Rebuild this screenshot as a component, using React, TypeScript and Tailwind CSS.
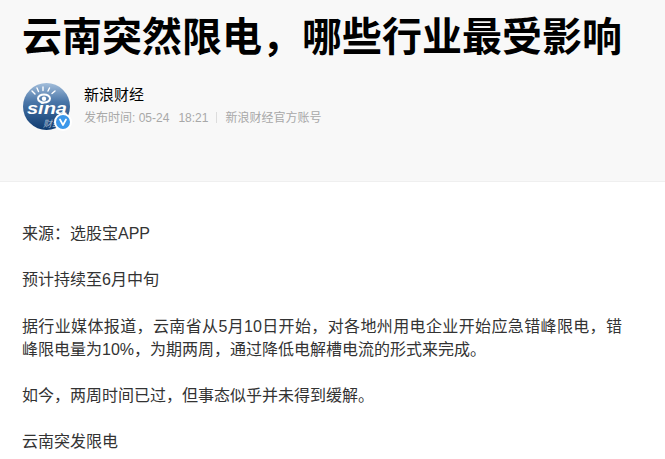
const CJK = "font-['Liberation_Sans','Noto_Sans_CJK_SC',sans-serif]";

const paragraphs = [
  '来源：选股宝APP',
  '预计持续至6月中旬',
  '据行业媒体报道，云南省从5月10日开始，对各地州用电企业开始应急错峰限电，错峰限电量为10%，为期两周，通过降低电解槽电流的形式来完成。',
  '如今，两周时间已过，但事态似乎并未得到缓解。',
  '云南突发限电',
];

const Avatar = () => (
  <div className="relative size-[47px] shrink-0">
    <svg viewBox="0 0 47 47" className="size-[47px]">
      <defs>
        <linearGradient id="sinaBg" x1="0" y1="0" x2="0" y2="1">
          <stop offset="0" stopColor="#a3bedb" />
          <stop offset="0.4" stopColor="#4a76a8" />
          <stop offset="1" stopColor="#0f3b70" />
        </linearGradient>
      </defs>
      <circle cx="23.5" cy="23.5" r="23.5" fill="url(#sinaBg)" />
      <g fill="none" stroke="#fff" strokeLinecap="round">
        <ellipse cx="21" cy="15.5" rx="6" ry="4" strokeWidth="2" />
        <path d="M12 11 L9 8 M15.5 8.5 L14 5 M20 7.5 L20 4 M25 8 L26.5 5 M29 10.5 L32 8" strokeWidth="1.4" />
      </g>
      <circle cx="21" cy="15.7" r="2.2" fill="#fff" />
      <text x="4" y="31" fill="#fff" fontSize="17" fontWeight="700" fontStyle="italic" fontFamily="Liberation Sans, sans-serif" textLength="40" lengthAdjust="spacingAndGlyphs">sina</text>
      <text x="20" y="44" fill="#a9bcd3" fontSize="9" fontStyle="italic" fontFamily="Noto Sans CJK SC, sans-serif">财经</text>
    </svg>
    <div className="absolute right-[-2px] bottom-[-1px] flex size-[18px] items-center justify-center rounded-full border-2 border-white bg-[#3b97ea]">
      <svg viewBox="0 0 10 10" className="size-[10px]" fill="none" stroke="#fff" strokeWidth="1.7" strokeLinecap="round" strokeLinejoin="round">
        <path d="M2 2.5 L5 8 L8 2.5" />
      </svg>
    </div>
  </div>
);

export default function App() {
  return (
    <div className={`${CJK} h-[459px] w-[665px] overflow-hidden bg-white`}>
      <header className="h-[182px] border-b border-[#efefef] bg-[#f8f8f8] px-[22px] pt-[14px]">
        <h1 className="whitespace-nowrap text-[40px] font-bold leading-[46px] text-black">云南突然限电，哪些行业最受影响</h1>
        <div className="mt-[23px] flex items-center gap-[15px] pl-px">
          <Avatar />
          <div className="-mt-[2px] -ml-px">
            <div className="text-[15px] leading-[20px] text-black">新浪财经</div>
            <div className="mt-[4px] flex items-center text-[12px] leading-[18px] text-[#a8a8a8]">
              <span>发布时间: 05-24</span>
              <span className="ml-[9px]">18:21</span>
              <span className="mx-[8px] h-[11px] w-px bg-[#dddddd]" />
              <span>新浪财经官方账号</span>
            </div>
          </div>
        </div>
      </header>
      <main className="w-[644px] px-[22px] pt-[40px] text-justify text-[16px] leading-[23.3px] text-[#333333]">
        {paragraphs.map((text) => (
          <p key={text} className="mb-[23px]">
            {text}
          </p>
        ))}
      </main>
    </div>
  );
}
